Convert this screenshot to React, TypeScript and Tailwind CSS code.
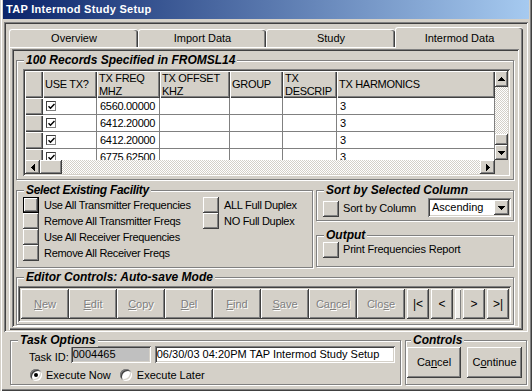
import React from "react";

const raised =
  "bg-[#d4d0c8] shadow-[inset_-1px_-1px_#404040,inset_1px_1px_#fff,inset_-2px_-2px_#808080]";
const sunken =
  "shadow-[inset_1px_1px_#808080,inset_-1px_-1px_#fff,inset_2px_2px_#404040,inset_-2px_-2px_#d4d0c8]";
const hdr =
  "bg-[#d4d0c8] shadow-[inset_1px_1px_#fff,inset_-1px_-1px_#404040,inset_-2px_-2px_#808080]";
const dither =
  "bg-[repeating-conic-gradient(#fff_0_25%,#d4d0c8_0_50%)] bg-[length:2px_2px]";
const cell = "bg-white border-r border-b border-[#808080] flex items-center";
const disabled = "text-[#808080] [text-shadow:1px_1px_0_#fff]";

type Dir = "up" | "down" | "left" | "right";

function Tri({ dir }: { dir: Dir }) {
  if (dir === "up" || dir === "down") {
    return (
      <svg width="7" height="4" viewBox="0 0 7 4" shapeRendering="crispEdges">
        <polygon points={dir === "up" ? "3.5,0 7,4 0,4" : "0,0 7,0 3.5,4"} fill="#000" />
      </svg>
    );
  }
  return (
    <svg width="4" height="7" viewBox="0 0 4 7" shapeRendering="crispEdges">
      <polygon points={dir === "left" ? "4,0 4,7 0,3.5" : "0,0 0,7 4,3.5"} fill="#000" />
    </svg>
  );
}

function Group({
  title,
  className = "",
  legend = "left-[7px]",
  children,
}: {
  title: string;
  className?: string;
  legend?: string;
  children?: React.ReactNode;
}) {
  return (
    <div
      className={`relative border border-[#808080] shadow-[inset_1px_1px_#fff,1px_1px_#fff] ${className}`}
    >
      <span
        className={`absolute top-[-8px] ${legend} bg-[#d4d0c8] px-[2px] text-[12px] leading-[14px] font-bold italic whitespace-nowrap`}
      >
        {title}
      </span>
      {children}
    </div>
  );
}

function SqBtn({ focus }: { focus?: boolean }) {
  return (
    <div
      className={`w-[16px] h-[16px] shrink-0 ${raised} ${focus ? "border border-black" : ""}`}
    />
  );
}

function Check() {
  return (
    <div className="w-[10px] h-[10px] bg-white border border-[#808080] border-t-[#404040] border-l-[#404040] flex items-center justify-center">
      <svg width="7" height="7" viewBox="0 0 7 7">
        <path d="M0.5 3.2 L2.5 5.2 L6.5 1" stroke="#000" strokeWidth="1.5" fill="none" />
      </svg>
    </div>
  );
}

function Radio({ on }: { on?: boolean }) {
  return (
    <div
      className={`w-[12px] h-[12px] rounded-full bg-white shrink-0 flex items-center justify-center ${sunken}`}
    >
      {on && <div className="w-[4px] h-[4px] rounded-full bg-black" />}
    </div>
  );
}

const freqs = ["6560.00000", "6412.20000", "6412.20000", "6775.62500"];

function Grid() {
  return (
    <div className={`mt-[8px] ml-[6px] w-[487px] h-[107px] p-[2px] bg-[#d4d0c8] ${sunken}`}>
      <div className="flex h-[89px]">
        <div className="w-[470px] h-[89px] overflow-hidden tracking-[-0.3px]">
          <div className="flex h-[27px]">
            <div className={`w-[18px] ${hdr}`} />
            <div className={`w-[54px] flex items-center pl-[2px] ${hdr}`}>USE TX?</div>
            <div className={`w-[63px] flex items-center pl-[2px] ${hdr}`}>
              TX FREQ
              <br />
              MHZ
            </div>
            <div className={`w-[70px] flex items-center pl-[2px] ${hdr}`}>
              TX OFFSET
              <br />
              KHZ
            </div>
            <div className={`w-[53px] flex items-center pl-[2px] ${hdr}`}>GROUP</div>
            <div className={`w-[54px] flex items-center pl-[2px] ${hdr}`}>
              TX
              <br />
              DESCRIP
            </div>
            <div className={`w-[158px] flex items-center pl-[2px] ${hdr}`}>TX HARMONICS</div>
          </div>
          {freqs.map((f, i) => (
            <div key={i} className="flex h-[17px]">
              <div className={`w-[18px] ${hdr}`} />
              <div className={`w-[54px] pl-[3px] ${cell}`}>
                <Check />
              </div>
              <div className={`w-[63px] pl-[3px] ${cell}`}>{f}</div>
              <div className={`w-[70px] ${cell}`} />
              <div className={`w-[53px] ${cell}`} />
              <div className={`w-[54px] ${cell}`} />
              <div className={`w-[158px] pl-[3px] ${cell}`}>3</div>
            </div>
          ))}
        </div>
        <div className="w-[13px] flex flex-col">
          <div className={`h-[16px] flex items-center justify-center ${raised}`}>
            <Tri dir="up" />
          </div>
          <div className={`flex-1 ${dither}`} />
          <div className={`h-[11px] ${raised}`} />
          <div className={`h-[15px] flex items-center justify-center ${raised}`}>
            <Tri dir="down" />
          </div>
        </div>
      </div>
      <div className="flex h-[14px]">
        <div className={`w-[15px] flex items-center justify-center ${raised}`}>
          <Tri dir="left" />
        </div>
        <div className={`w-[22px] ${raised}`} />
        <div className={`w-[418px] ${dither}`} />
        <div className={`w-[15px] flex items-center justify-center ${raised}`}>
          <Tri dir="right" />
        </div>
        <div className="w-[13px] bg-[#d4d0c8]" />
      </div>
    </div>
  );
}

function EdBtn({ pre, u, post }: { pre: string; u: string; post: string }) {
  return (
    <div className={`w-[48px] h-[30px] flex items-center justify-center ${raised} ${disabled}`}>
      {pre}
      <u>{u}</u>
      {post}
    </div>
  );
}

function NavBtn({ label }: { label: string }) {
  return (
    <div className={`w-[22px] h-[30px] flex items-center justify-center text-[12px] ${raised}`}>
      {label}
    </div>
  );
}

export default function App() {
  const facility = [
    "Use All Transmitter Frequencies",
    "Remove All Transmitter Freqs",
    "Use All Receiver Frequencies",
    "Remove All Receiver Freqs",
  ];
  return (
    <div className="w-[532px] h-[391px] bg-[#d4d0c8] px-[3px] overflow-hidden text-black text-[11px] leading-[13px] font-['Liberation_Sans',Arial,sans-serif] shadow-[inset_1px_0_#d4d0c8,inset_2px_0_#fff,inset_-1px_-1px_#404040,inset_-2px_-2px_#808080]">
      <div className="h-[19px] flex items-center pl-[3px] bg-[linear-gradient(to_right,#0a246a,#a6caf0)] text-white font-bold tracking-[0.3px]">
        TAP Intermod Study Setup
      </div>

      <div className={`mt-[3px] ml-[1px] w-[524px] h-[310px] p-[2px] ${sunken}`}>
        <div className="pt-[3px] px-[3px]">
          <div className="flex items-end h-[20px]">
            <div className="w-[129px] h-[18px] flex items-center justify-center rounded-t-[3px] border-t border-l border-white shadow-[inset_-1px_0_#404040,inset_-2px_0_#808080]">
              Overview
            </div>
            <div className="w-[128px] h-[18px] flex items-center justify-center rounded-t-[3px] border-t border-l border-white shadow-[inset_-1px_0_#404040,inset_-2px_0_#808080]">
              Import Data
            </div>
            <div className="w-[129px] h-[18px] flex items-center justify-center rounded-t-[3px] border-t border-l border-white shadow-[inset_-1px_0_#404040,inset_-2px_0_#808080]">
              Study
            </div>
            <div className="relative z-10 -mb-[1px] w-[128px] h-[21px] flex items-center justify-center rounded-t-[3px] bg-[#d4d0c8] border-t border-l border-white shadow-[inset_-1px_0_#404040,inset_-2px_0_#808080]">
              Intermod Data
            </div>
          </div>

          <div className="w-[514px] h-[283px] pt-[2px] pl-[3px] shadow-[inset_1px_1px_#fff,inset_-1px_-1px_#404040,inset_-2px_-2px_#808080]">
            <div className={`w-[507px] h-[278px] p-[2px] ${sunken}`}>
              <div className="pl-[2px]">
                <Group title="100 Records Specified in FROMSL14" className="mt-[9px] w-[498px] h-[120px]">
                  <Grid />
                </Group>

                <div className="mt-[10px] flex gap-[3px]">
                  <Group title="Select Existing Facility" className="w-[297px] h-[78px] pt-[6px] pl-[6px] flex tracking-[-0.3px]">
                    <div className="w-[180px] flex flex-col">
                      {facility.map((t, i) => (
                        <div key={t} className="flex items-center h-[16px]">
                          <SqBtn focus={i === 0} />
                          <span className="ml-[5px] whitespace-nowrap">{t}</span>
                        </div>
                      ))}
                    </div>
                    <div className="flex flex-col">
                      <div className="flex items-center h-[16px]">
                        <SqBtn />
                        <span className="ml-[5px] whitespace-nowrap">ALL Full Duplex</span>
                      </div>
                      <div className="flex items-center h-[16px]">
                        <SqBtn />
                        <span className="ml-[5px] whitespace-nowrap">NO Full Duplex</span>
                      </div>
                    </div>
                  </Group>

                  <div className="w-[198px] flex flex-col">
                    <Group title="Sort by Selected Column" className="h-[31px] pt-[7px] pl-[6px] pr-[2px] flex items-start">
                      <div className="mt-[3px]">
                        <SqBtn />
                      </div>
                      <span className="ml-[4px] mt-[4px] whitespace-nowrap tracking-[-0.2px]">Sort by Column</span>
                      <div className={`ml-auto w-[83px] h-[19px] p-[2px] bg-white flex items-center ${sunken}`}>
                        <span className="flex-1 pl-[2px]">Ascending</span>
                        <div className={`w-[15px] h-[15px] flex items-center justify-center ${raised}`}>
                          <Tri dir="down" />
                        </div>
                      </div>
                    </Group>
                    <Group title="Output" className="mt-[14px] h-[32px] pt-[6px] pl-[6px] flex items-start">
                      <SqBtn />
                      <span className="ml-[4px] mt-[1px] whitespace-nowrap tracking-[-0.2px]">Print Frequencies Report</span>
                    </Group>
                  </div>
                </div>

                <Group title="Editor Controls: Auto-save Mode" className="mt-[9px] w-[498px] h-[48px] pt-[8px] pl-[1px]">
                  <div className={`w-[493px] h-[36px] pt-[3px] pl-[3px] flex ${sunken}`}>
                    <EdBtn pre="" u="N" post="ew" />
                    <EdBtn pre="" u="E" post="dit" />
                    <EdBtn pre="" u="C" post="opy" />
                    <EdBtn pre="" u="D" post="el" />
                    <EdBtn pre="" u="F" post="ind" />
                    <EdBtn pre="" u="S" post="ave" />
                    <EdBtn pre="Ca" u="n" post="cel" />
                    <EdBtn pre="Clo" u="s" post="e" />
                    <div className="ml-[2px] flex gap-[2px]">
                      <NavBtn label="|<" />
                      <NavBtn label="<" />
                      <div className="w-[6px] h-[30px] bg-[#f0eeea] shadow-[inset_1px_1px_#fff,inset_-1px_-1px_#808080]" />
                      <NavBtn label=">" />
                      <NavBtn label=">|" />
                    </div>
                  </div>
                </Group>
              </div>
            </div>
          </div>
        </div>
      </div>

      <div className="mt-[8px] ml-[7px] flex gap-[4px]">
        <Group title="Task Options" className="w-[391px] h-[45px] pt-[5px] pl-[18px]">
          <div className="flex items-end h-[17px]">
            <span className="mb-[-1px]">Task ID:</span>
            <div className={`ml-[2px] w-[80px] h-[17px] px-[2px] flex items-center bg-[#c0c0c0] ${sunken}`}>
              0004465
            </div>
            <div className={`ml-[4px] w-[240px] h-[17px] px-[2px] flex items-center bg-white ${sunken}`}>
              06/30/03 04:20PM TAP Intermod Study Setup
            </div>
          </div>
          <div className="mt-[6px] flex items-center h-[12px]">
            <div className="ml-[1px]">
              <Radio on />
            </div>
            <span className="ml-[4px]">Execute Now</span>
            <div className="ml-[9px]">
              <Radio />
            </div>
            <span className="ml-[5px]">Execute Later</span>
          </div>
        </Group>
        <Group title="Controls" legend="left-[5px]" className="w-[122px] h-[45px] pt-[6px] pl-[1px] flex gap-[6px]">
          <div className={`w-[54px] h-[31px] flex items-center justify-center ${raised}`}>
            Ca<u>n</u>cel
          </div>
          <div className={`w-[55px] h-[31px] flex items-center justify-center ${raised}`}>
            C<u>o</u>ntinue
          </div>
        </Group>
      </div>
    </div>
  );
}
